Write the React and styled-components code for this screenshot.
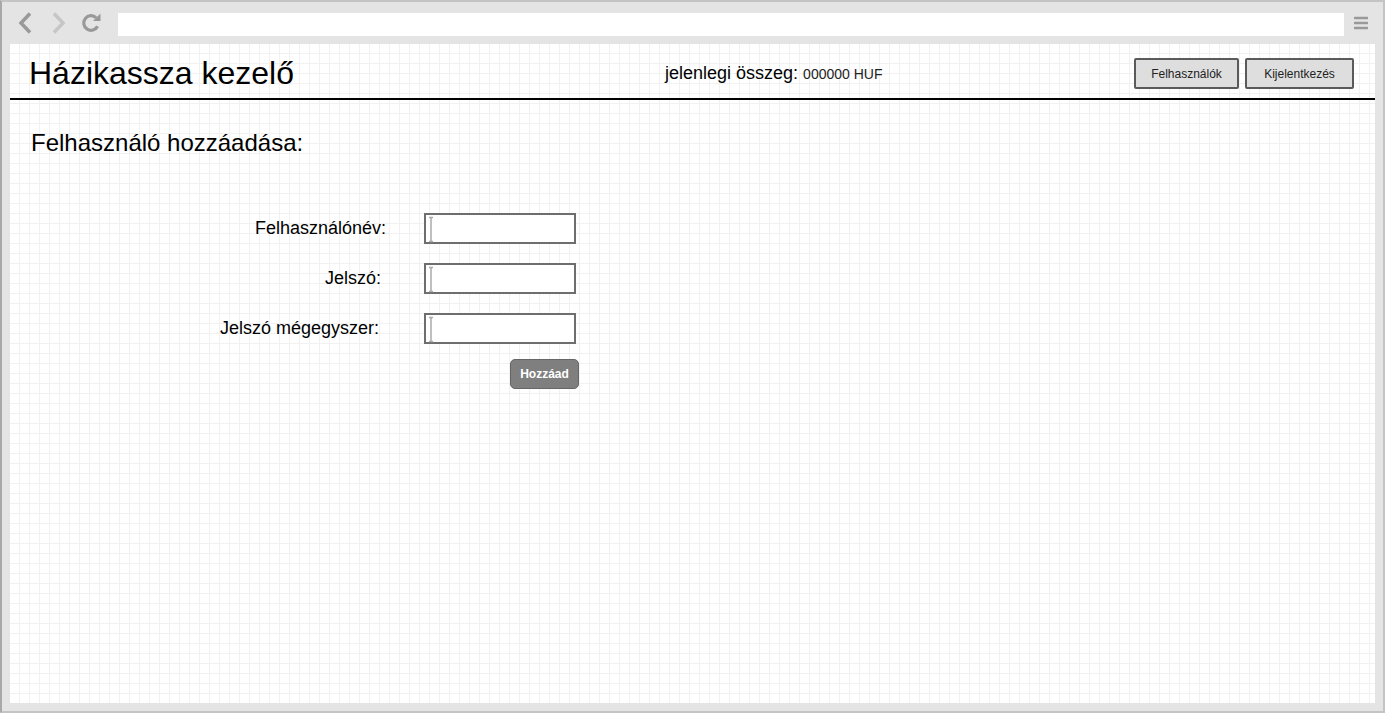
import React from "react";
import styled, { createGlobalStyle } from "styled-components";

const Global = createGlobalStyle`
  html, body { margin: 0; padding: 0; background: #fff; }
  body { font-family: "Liberation Sans", Arial, sans-serif; }
  * { box-sizing: border-box; }
`;

const Window = styled.div`
  width: 1385px;
  height: 713px;
  background: #e4e4e4;
  border: 2px solid #c4c4c4;
  border-left-color: #a8a8a8;
  display: flex;
  flex-direction: column;
  padding: 0 8px 8px 8px;
`;

const Toolbar = styled.div`
  height: 42px;
  display: flex;
  align-items: center;
`;

const NavIcon = styled.svg`
  flex: none;
  display: block;
  margin-left: ${(p) => p.$ml || 0}px;
  margin-right: ${(p) => p.$mr || 0}px;
`;

const Address = styled.div`
  flex: 1;
  height: 23px;
  background: #fff;
  margin-left: 17px;
  margin-right: 10px;
  margin-top: 3px;
`;

const Content = styled.div`
  flex: 1;
  background-color: #fff;
  background-image:
    linear-gradient(to right, #f1f1f1 1px, transparent 1px),
    linear-gradient(to bottom, #f1f1f1 1px, transparent 1px);
  background-size: 10px 10px;
  background-position: 9px 9px;
  display: flex;
  flex-direction: column;
`;

const Header = styled.header`
  height: 56px;
  border-bottom: 2px solid #000;
  display: flex;
  align-items: center;
  padding: 5px 21px 0 19px;
`;

const Title = styled.h1`
  margin: 0;
  font-weight: normal;
  font-size: 32px;
  color: #000;
  flex: none;
  width: 636px;
`;

const Balance = styled.div`
  flex: 1;
  font-size: 18px;
  color: #000;
`;

const Small = styled.span`
  font-size: 14px;
  color: #222;
`;

const Buttons = styled.div`
  display: flex;
  gap: 6px;
`;

const HeadButton = styled.button`
  height: 31px;
  width: ${(p) => p.$w}px;
  background: #dedede;
  border: 2px solid #5a5a5a;
  border-radius: 2px;
  font-family: "Liberation Sans", Arial, sans-serif;
  font-size: 12px;
  color: #222;
  padding: 0;
`;

const Main = styled.main`
  padding: 29px 21px;
`;

const Heading = styled.h2`
  margin: 0;
  font-weight: normal;
  font-size: 24px;
  color: #000;
`;

const Form = styled.div`
  margin-top: 56px;
  display: grid;
  grid-template-columns: 355px 152px;
  row-gap: 19px;
  column-gap: 38px;
  align-items: center;
`;

const Label = styled.label`
  font-size: 18px;
  color: #000;
  text-align: right;
  padding-right: ${(p) => p.$pr || 0}px;
`;

const InputBox = styled.div`
  height: 31px;
  border: 2px solid #6e6e6e;
  background: #fff;
  position: relative;
`;

const Caret = styled.svg`
  position: absolute;
  left: 2px;
  top: 1px;
`;

const Submit = styled.button`
  grid-column: 2;
  justify-self: end;
  margin-right: -3px;
  margin-top: -4px;
  width: 69px;
  height: 30px;
  background: #7f7f7f;
  border: 1px solid #666;
  border-radius: 5px;
  color: #fff;
  font-family: "Liberation Sans", Arial, sans-serif;
  font-weight: bold;
  font-size: 12px;
  padding: 0;
`;

const Field = ({ label, pr }) => (
  <>
    <Label $pr={pr}>{label}</Label>
    <InputBox>
      <Caret width="6" height="27" viewBox="0 0 6 27">
        <path d="M1 1.5h4M1 25.5h4M3 1.5v24" stroke="#aaa" strokeWidth="1.5" fill="none" />
      </Caret>
    </InputBox>
  </>
);

export default function App() {
  return (
    <>
      <Global />
      <Window>
        <Toolbar>
          <NavIcon $ml={8} width="14" height="22" viewBox="0 0 14 22">
            <path d="M12 1.5 L3 11 L12 20.5" stroke="#999" strokeWidth="3.5" fill="none" />
          </NavIcon>
          <NavIcon $ml={20} width="14" height="22" viewBox="0 0 14 22">
            <path d="M2 1.5 L11 11 L2 20.5" stroke="#c6c6c6" strokeWidth="3.5" fill="none" />
          </NavIcon>
          <NavIcon $ml={15} width="20" height="20" viewBox="0 0 20 20">
            <path d="M16.6 13.3 A7.3 7.3 0 1 1 15.2 4.8" stroke="#999" strokeWidth="3.2" fill="none" />
            <polygon points="12,8 19.5,8 19.5,0.5" fill="#999" />
          </NavIcon>
          <Address />
          <NavIcon $mr={7} width="14" height="14" viewBox="0 0 14 14">
            <path d="M1 2h12M1 7h12M1 12h12" stroke="#999" strokeWidth="2.6" strokeLinecap="round" />
          </NavIcon>
        </Toolbar>
        <Content>
          <Header>
            <Title>Házikassza kezelő</Title>
            <Balance>
              jelenlegi összeg: <Small>000000 HUF</Small>
            </Balance>
            <Buttons>
              <HeadButton $w={105}>Felhasználók</HeadButton>
              <HeadButton $w={109}>Kijelentkezés</HeadButton>
            </Buttons>
          </Header>
          <Main>
            <Heading>Felhasználó hozzáadása:</Heading>
            <Form>
              <Field label="Felhasználónév:" pr={0} />
              <Field label="Jelszó:" pr={5} />
              <Field label="Jelszó mégegyszer:" pr={7} />
              <Submit>Hozzáad</Submit>
            </Form>
          </Main>
        </Content>
      </Window>
    </>
  );
}
